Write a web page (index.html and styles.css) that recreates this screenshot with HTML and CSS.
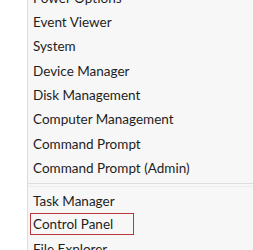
FILE: index.html
```html
<!DOCTYPE html>
<html>

<head>
    <title>Quick Link Menu</title>
    <link rel="stylesheet" href="styles.css">
</head>

<body>
    <div class="menu">
        <ul class="group first">
            <li>Power Options</li>
            <li>Event Viewer</li>
            <li>System</li>
            <li>Device Manager</li>
            <li>Disk Management</li>
            <li>Computer Management</li>
            <li>Command Prompt</li>
            <li>Command Prompt (Admin)</li>
        </ul>
        <div class="separator"></div>
        <ul class="group">
            <li>Task Manager</li>
            <li><span class="highlight">Control Panel</span></li>
            <li>File Explorer</li>
        </ul>
    </div>
</body>

</html>
```

FILE: styles.css
```css
body {
    margin: 0;
    background-color: #ffffff;
    font-family: Lato, "Noto Sans", sans-serif;
    overflow: hidden;
}

.menu {
    margin-left: 27px;
    height: 250px;
    border-left: 1px solid #dcdcdc;
    background-color: #f7f7f7;
    overflow: hidden;
}

.group {
    list-style: none;
    margin: 0;
    padding: 0;
}

.group.first {
    margin-top: -14.5px;
}

.group li {
    height: 24.4px;
    line-height: 24.4px;
    padding-left: 5px;
    font-size: 13.5px;
    color: #1e1e1e;
    white-space: nowrap;
}

.separator {
    height: 2px;
    margin: 2px 0 2px 0;
    border-top: 1px solid #dedede;
    border-bottom: 1px solid #ececec;
}

.highlight {
    display: inline-block;
    margin-left: -3px;
    padding: 0 20px 0 2px;
    height: 20px;
    line-height: 20px;
    border: 1px solid #b8383c;
    vertical-align: top;
}
```
